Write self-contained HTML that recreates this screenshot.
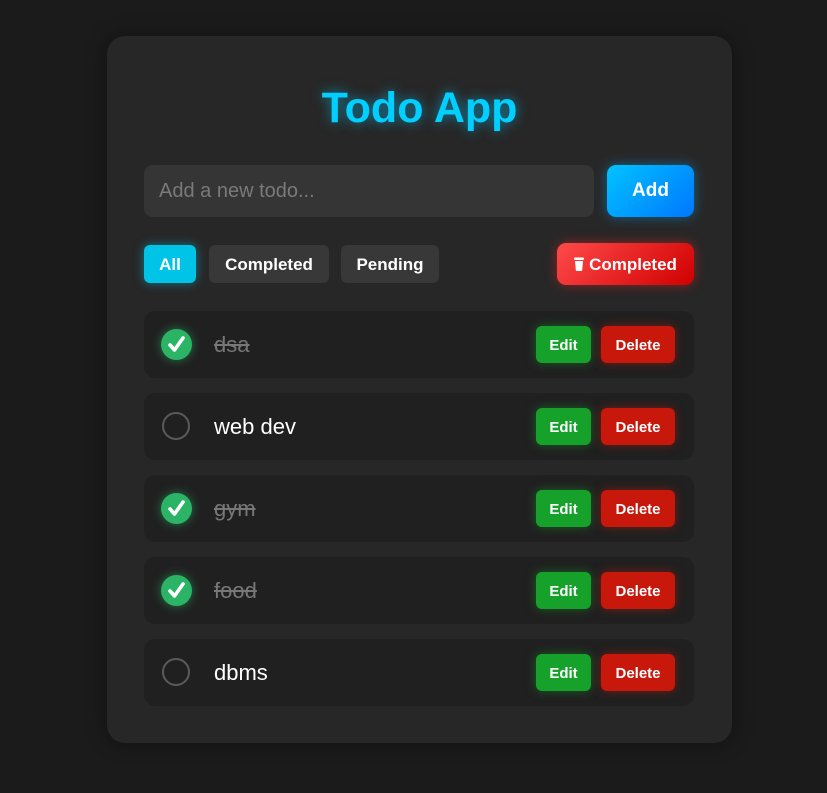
<!DOCTYPE html>
<html><head><meta charset="utf-8"><style>
*{box-sizing:border-box;margin:0;padding:0}
html,body{width:827px;height:793px;background:#1b1b1b;overflow:hidden;font-family:"Liberation Sans","DejaVu Sans",sans-serif}
.card{position:absolute;left:107px;top:36px;width:625px;height:707px;background:#272727;border-radius:18px;box-shadow:0 0 20px rgba(0,0,0,.4)}
h1{position:absolute;left:107px;width:625px;top:82px;text-align:center;color:#00cfff;font-size:43px;font-weight:bold;text-shadow:0 0 12px rgba(0,200,255,.6);line-height:52px}
.abs{position:absolute}
.input{left:144px;top:165px;width:450px;height:52px;background:#353535;border-radius:9px;color:#7a7a7a;font-size:20px;padding:14px 15px;line-height:24px}
.add{left:607px;top:165px;width:87px;height:52px;border-radius:9px;background:linear-gradient(135deg,#00c3ff,#0077ff);color:#fff;font-weight:bold;font-size:19px;text-align:center;line-height:52px;box-shadow:0 0 12px rgba(0,170,255,.45)}
.f{top:245px;height:38px;border-radius:6px;background:#383838;color:#fff;font-weight:bold;font-size:17px;text-align:center;line-height:40px}
.item{left:144px;width:550px;height:67px;background:#202020;border-radius:11px}
.chk{position:absolute;left:18px;top:19px;width:28px;height:28px;border-radius:50%;border:2px solid #5a5a5a}
.chk.on{left:17px;top:18px;width:31px;height:31px;background:#2bb366;border:none;box-shadow:0 0 10px rgba(43,179,102,.6)}
.txt{position:absolute;left:70px;top:20px;font-size:22px;line-height:27px;color:#fff}
.txt.done{color:#777;text-decoration:line-through}
.edit{position:absolute;left:392px;top:15px;width:55px;height:37px;border-radius:6px;background:#16a22a;color:#fff;font-weight:bold;font-size:15px;text-align:center;line-height:39px;box-shadow:0 0 10px rgba(22,162,42,.5)}
.del{position:absolute;left:457px;top:15px;width:74px;height:37px;border-radius:6px;background:#c8170b;color:#fff;font-weight:bold;font-size:15px;text-align:center;line-height:39px;box-shadow:0 0 10px rgba(200,23,11,.5)}
</style></head><body>
<div class="card"></div>
<h1>Todo App</h1>
<div class="abs input">Add a new todo...</div>
<div class="abs add">Add</div>
<div class="abs f" style="left:144px;width:52px;background:#00c3e8;box-shadow:0 0 10px rgba(0,195,232,.5)">All</div>
<div class="abs f" style="left:209px;width:120px">Completed</div>
<div class="abs f" style="left:341px;width:98px">Pending</div>
<div class="abs f" style="left:557px;width:137px;top:243px;height:42px;line-height:44px;border-radius:9px;background:linear-gradient(135deg,#ff4a4a,#d00000);box-shadow:0 0 12px rgba(255,40,40,.45)"><svg width="10" height="14" viewBox="0 0 10 14" style="vertical-align:-1px;margin-right:5px"><rect x="0" y="0.5" width="10" height="2.5" rx="1" fill="#fff"/><path d="M1 4h8l-.8 9.2q-.1.8-.9.8H2.7q-.8 0-.9-.8Z" fill="#fff"/></svg>Completed</div>
<svg width="0" height="0" style="position:absolute"><defs><path id="ck" d="M9 16l4.5 5L22 9" fill="none" stroke="#fff" stroke-width="3.6" stroke-linecap="round" stroke-linejoin="round"/></defs></svg>
<div class="abs item" style="top:311px"><div class="chk on"><svg width="31" height="31"><use href="#ck"/></svg></div><div class="txt done">dsa</div><div class="edit">Edit</div><div class="del">Delete</div></div>
<div class="abs item" style="top:393px"><div class="chk"></div><div class="txt">web dev</div><div class="edit">Edit</div><div class="del">Delete</div></div>
<div class="abs item" style="top:475px"><div class="chk on"><svg width="31" height="31"><use href="#ck"/></svg></div><div class="txt done">gym</div><div class="edit">Edit</div><div class="del">Delete</div></div>
<div class="abs item" style="top:557px"><div class="chk on"><svg width="31" height="31"><use href="#ck"/></svg></div><div class="txt done">food</div><div class="edit">Edit</div><div class="del">Delete</div></div>
<div class="abs item" style="top:639px"><div class="chk"></div><div class="txt">dbms</div><div class="edit">Edit</div><div class="del">Delete</div></div>
</body></html>
